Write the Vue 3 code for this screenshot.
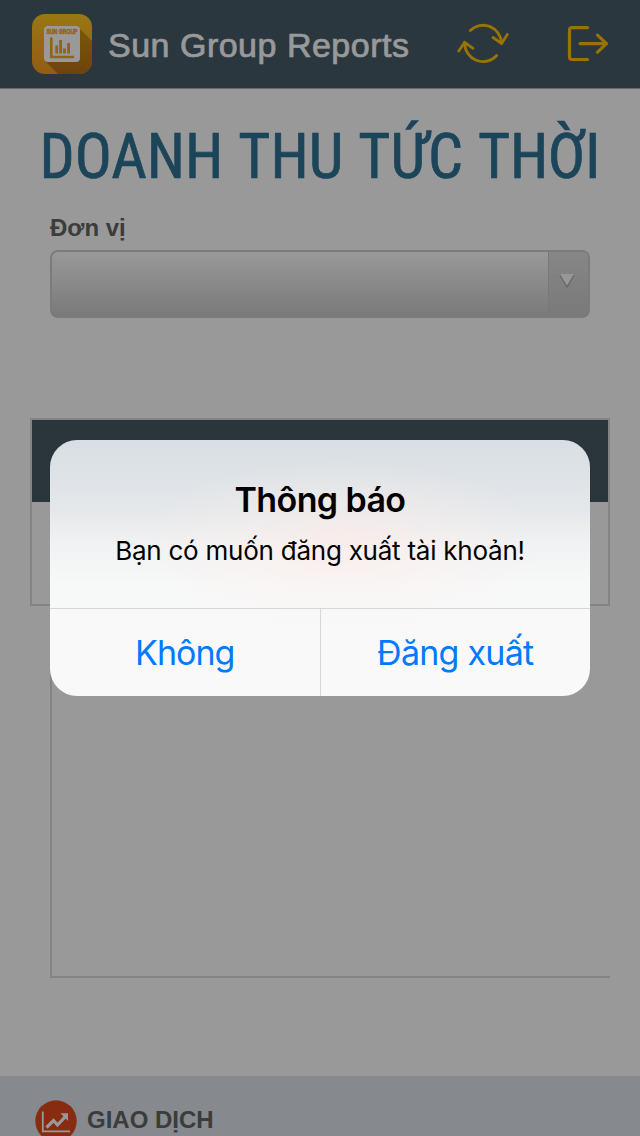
<script setup>
import { ref } from 'vue'

const appName = ref('Sun Group Reports')
const actions = ref([
  { label: 'Không', key: 'cancel' },
  { label: 'Đăng xuất', key: 'logout' },
])
</script>

<template>
  <div class="screen">
    <header class="bar">
      <svg class="logo" viewBox="0 0 60 60">
        <defs>
          <linearGradient id="logoFill" x1="0" y1="0" x2="0" y2="1">
            <stop offset="0" stop-color="#ffc922" />
            <stop offset="0.45" stop-color="#f9b020" />
            <stop offset="1" stop-color="#f59a22" />
          </linearGradient>
          <linearGradient id="logoShade" x1="0" y1="0" x2="0" y2="1">
            <stop offset="0" stop-color="#c99412" />
            <stop offset="1" stop-color="#b97014" />
          </linearGradient>
          <clipPath id="logoClip"><rect width="60" height="60" rx="13" /></clipPath>
        </defs>
        <g clip-path="url(#logoClip)">
          <rect width="60" height="60" fill="url(#logoFill)" />
          <path d="M46 13 L60 27 V60 H26 L13 47 Z" fill="url(#logoShade)" />
        </g>
        <rect x="12" y="12" width="36" height="36" rx="4" fill="#fff" />
        <text x="14.5" y="20" class="logo-text" textLength="31" lengthAdjust="spacingAndGlyphs">SUN GROUP</text>
        <path d="M19.3 23.5 V43 H42" fill="none" stroke="#f5a31f" stroke-width="2.6" />
        <path d="M24.7 39.5 V31.5 M28.6 39.5 V26 M32.5 39.5 V34.5 M36.6 39.5 V29" fill="none" stroke="#f5a31f" stroke-width="2.8" />
      </svg>
      <h1 class="app-name">{{ appName }}</h1>
      <svg class="refresh" viewBox="0 0 52 44">
        <path d="M13.3 9.5 A18.4 18.6 0 0 1 44.5 22.5" />
        <path d="M36 16.5 L44.6 22.5 L50.3 13.5" />
        <path d="M39.7 34.5 A18.4 18.6 0 0 1 7.7 21.5" />
        <path d="M1.8 30 L7.7 21.3 L16 27.3" />
      </svg>
      <svg class="exit" viewBox="0 0 44 40">
        <path d="M21.5 3.7 H6 Q3.5 3.7 3.5 6.2 V33 Q3.5 35.5 6 35.5 H21.5" />
        <path d="M14 19.6 H40.5 M31.5 11.2 L40.5 19.6 L31.5 28.2" />
      </svg>
    </header>

    <main class="body">
      <svg class="heading" viewBox="0 0 640 90">
        <text x="39.5" y="78.7" textLength="561" lengthAdjust="spacingAndGlyphs">DOANH THU TỨC THỜI</text>
      </svg>
      <label class="label">Đơn vị</label>
      <div class="select">
        <div class="value"></div>
        <div class="drop">
          <svg viewBox="0 0 18 16"><path d="M2 2 L9 13.8 L16 2" class="shade" /><path d="M2 1 H16 L9 12.5 Z" fill="#fcfcfc" /></svg>
        </div>
      </div>
      <section class="table"><div class="thead"></div></section>
      <section class="panel"></section>
    </main>

    <footer class="foot">
      <svg class="badge" viewBox="0 0 42 42">
        <circle cx="21" cy="21" r="20.7" fill="#e24a1c" />
        <path d="M7.8 11.5 V31.3 H35" fill="none" stroke="#fff" stroke-width="1.8" />
        <path d="M11.5 27.5 L18.5 20.5 L22.5 25 L30.5 16.5" fill="none" stroke="#fff" stroke-width="3.2" />
        <path d="M25.5 13.2 H33 V21 Z" fill="#fff" />
      </svg>
      <span class="foot-text">GIAO DỊCH</span>
    </footer>

    <div class="overlay">
      <div class="dialog" role="alertdialog">
        <div class="message">
          <h2>Thông báo</h2>
          <p>Bạn có muốn đăng xuất tài khoản!</p>
        </div>
        <div class="actions">
          <button v-for="a in actions" :key="a.key" :class="a.key">{{ a.label }}</button>
        </div>
      </div>
    </div>
  </div>
</template>

<style>
body { background: #999; }
</style>

<style scoped>
.screen {
  position: relative;
  box-sizing: border-box;
  width: 640px;
  height: 1136px;
  overflow: hidden;
  display: flex;
  flex-direction: column;
  background: #fff;
  font-family: "Liberation Sans", Arial, sans-serif;
}
.bar {
  box-sizing: border-box;
  height: 89px;
  flex: none;
  display: flex;
  align-items: center;
  padding-left: 32px;
  background: #475c69;
  border-bottom: 1px solid #b0b4b8;
}
.logo { width: 60px; height: 60px; flex: none; }
.logo-text { font: bold 7.5px "Liberation Sans", sans-serif; fill: #f5a31f; stroke: #f5a31f; stroke-width: 0.5px; }
.app-name {
  width: 302px;
  margin: 2px 0 0 16px;
  font-size: 34px;
  line-height: 40px;
  font-weight: 400;
  letter-spacing: 0.5px;
  white-space: nowrap;
  color: #fff;
  -webkit-text-stroke: 0.7px #fff;
}
.refresh, .exit { flex: none; fill: none; stroke: #ffc107; stroke-width: 2.8; stroke-linecap: round; stroke-linejoin: round; }
.refresh { width: 52px; height: 44px; margin-left: 47px; margin-top: -2px; }
.exit { width: 44px; height: 40px; margin-left: 57px; stroke-width: 3.2; }
.body { flex: 1; display: flex; flex-direction: column; }
.heading { width: 640px; height: 90px; margin-top: 10px; flex: none; overflow: visible; }
.heading text {
  font: 400 63.5px "Roboto Condensed", Roboto, sans-serif;
  word-spacing: 2px;
  fill: #2f7396;
  stroke: #2f7396;
  stroke-width: 0.7px;
}
.label {
  margin: 25px 0 0 50px;
  font-size: 24px;
  line-height: 28px;
  font-weight: 700;
  color: #646464;
}
.select {
  box-sizing: border-box;
  width: 540px;
  height: 68px;
  flex: none;
  margin: 8px 0 0 50px;
  display: flex;
  border: 2px solid #cdcdcd;
  border-radius: 8px;
  overflow: hidden;
  background: linear-gradient(#fff, #cbcbcb);
}
.value { flex: 1; }
.drop {
  width: 40px;
  box-sizing: border-box;
  border-left: 1px solid #c8c8c8;
  background: linear-gradient(#e0e0e0, #cbcbcb);
}
.drop svg { display: block; width: 18px; height: 16px; margin: 21px 0 0 9px; }
.shade { fill: none; stroke: #aaa; stroke-width: 1.4; }
.table {
  box-sizing: border-box;
  width: 580px;
  height: 188px;
  flex: none;
  margin: 100px 0 0 30px;
  border: 2px solid #dcdcdc;
}
.thead { height: 82px; background: #485965; }
.panel {
  box-sizing: border-box;
  width: 560px;
  height: 352px;
  flex: none;
  margin: 20px 0 0 50px;
  border: solid #dcdcdc;
  border-width: 0 0 2px 2px;
}
.foot {
  height: 60px;
  flex: none;
  display: flex;
  align-items: flex-start;
  background: #e0e5ed;
}
.badge { width: 42px; height: 42px; margin: 24px 0 0 35px; flex: none; }
.foot-text {
  margin: 30px 0 0 10px;
  font-size: 24px;
  line-height: 28px;
  font-weight: 700;
  color: #646464;
}
.overlay {
  position: absolute;
  inset: 0;
  display: flex;
  align-items: center;
  justify-content: center;
  background: rgba(0, 0, 0, 0.4);
}
.dialog {
  width: 540px;
  height: 256px;
  display: flex;
  flex-direction: column;
  overflow: hidden;
  border-radius: 27px;
  font-family: Inter, "Noto Sans", sans-serif;
  background:
    radial-gradient(ellipse 200px 85px at 54% 41%, rgba(255, 234, 229, 0.6), rgba(255, 238, 234, 0.3) 50%, rgba(255, 240, 236, 0)),
    linear-gradient(#d8dee3 0, #dee3e7 35px, #e5e8eb 70px, #f1f2f3 105px, #f7f8f8 145px, #f9f9f9 190px);
}
.message { height: 168px; text-align: center; color: #000; }
.message h2 {
  margin: 40px 0 0;
  font-size: 34px;
  line-height: 40px;
  font-weight: 600;
  letter-spacing: -0.6px;
}
.message p { margin: 15px 0 0; font-size: 26px; line-height: 32px; letter-spacing: -0.24px; }
.actions { flex: 1; display: flex; border-top: 1px solid #d9d5d8; }
.actions button {
  flex: 1;
  padding: 0;
  border: 0;
  background: none;
  font: 400 34px/40px Inter, "Noto Sans", sans-serif;
  letter-spacing: -0.95px;
  color: #007aff;
}
.actions .logout { border-left: 1px solid #d9d5d8; letter-spacing: -0.75px; }
</style>
